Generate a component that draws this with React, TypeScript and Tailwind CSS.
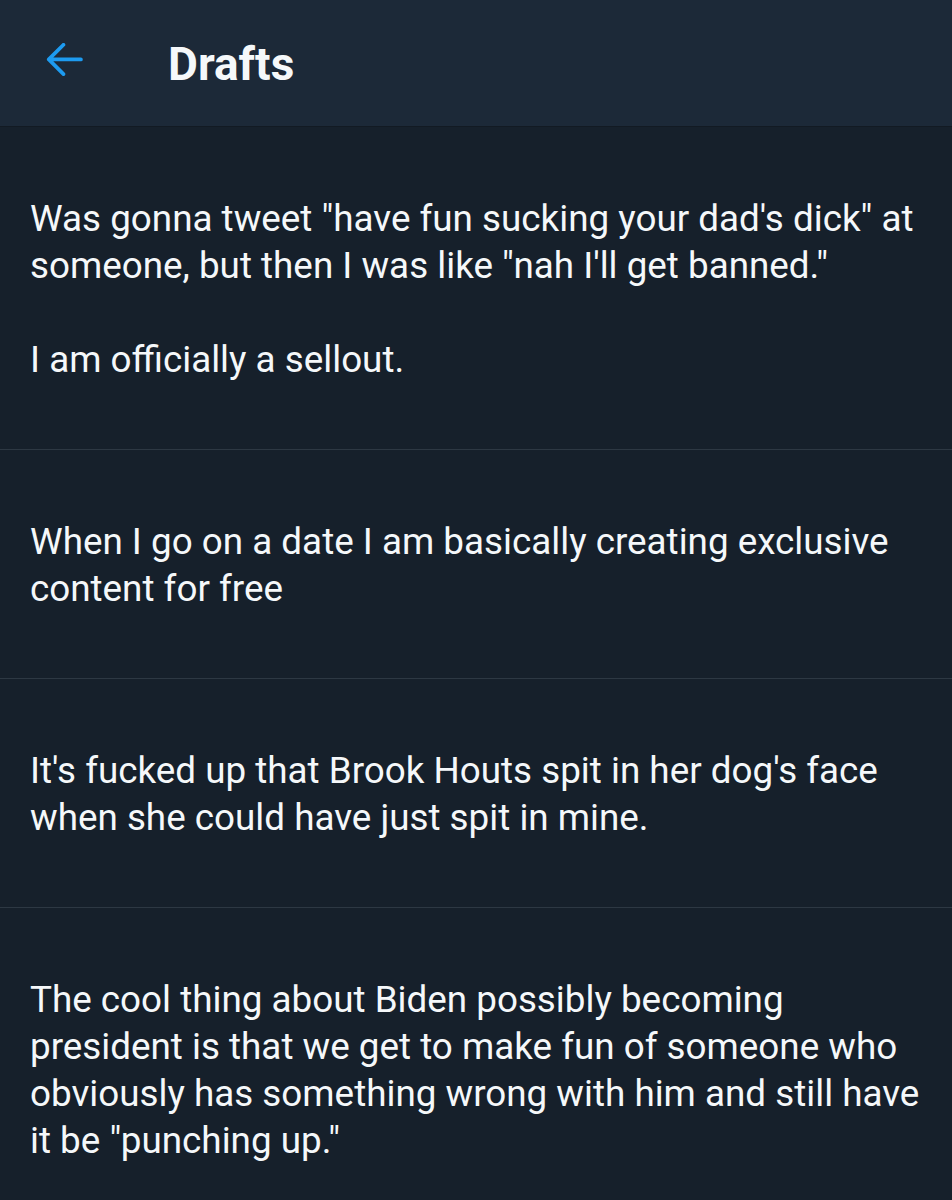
import React from "react";

const drafts: string[][] = [
  [
    "Was gonna tweet \"have fun sucking your dad's dick\" at someone, but then I was like \"nah I'll get banned.\"",
    "",
    "I am officially a sellout.",
  ],
  ["When I go on a date I am basically creating exclusive content for free"],
  ["It's fucked up that Brook Houts spit in her dog's face when she could have just spit in mine."],
  [
    "The cool thing about Biden possibly becoming president is that we get to make fun of someone who obviously has something wrong with him and still have it be \"punching up.\"",
  ],
];

export default function App() {
  return (
    <div
      className="w-[952px] h-[1200px] overflow-hidden bg-[#16202b] text-white"
      style={{ fontFamily: "Roboto, 'Noto Sans', sans-serif" }}
    >
      <header className="h-[127px] bg-[#1c2938] flex items-center border-b border-[#121a23]">
        <div className="w-[168px] flex items-center pl-[45px]">
          <svg width="40" height="40" viewBox="0 0 40 40" fill="none">
            <path
              d="M38 20H4M19 4L3 20l16 16"
              stroke="#1d9bf0"
              strokeWidth="4"
              strokeLinecap="round"
              strokeLinejoin="round"
              transform="translate(1 -2) scale(0.92)"
            />
          </svg>
        </div>
        <h1 className="text-[46px] font-bold text-[#f5f8fa] leading-none mt-[1px]">Drafts</h1>
      </header>
      <main>
        {drafts.map((lines, i) => (
          <div key={i} className="pl-[30px] pr-[26px] pt-[68px] pb-[66px] border-b border-[#2d3843]">
            <p className="text-[36.8px] leading-[47px] text-[#f5f8fa] whitespace-pre-wrap">
              {lines.join("\n")}
            </p>
          </div>
        ))}
      </main>
    </div>
  );
}
